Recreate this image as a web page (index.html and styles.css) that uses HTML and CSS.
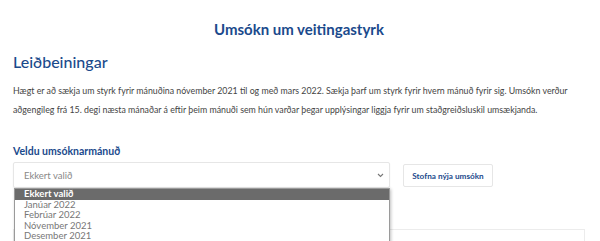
FILE: index.html
```html
<!DOCTYPE html>
<html lang="is">
<head>
  <meta charset="UTF-8" />
  <meta name="viewport" content="width=device-width, initial-scale=1.0"/>
  <title>Umsókn um veitingastyrk</title>
  <link rel="stylesheet" href="styles.css">
</head>
<body>
  <main class="page">
    <h1>Umsókn um veitingastyrk</h1>

    <h2>Leiðbeiningar</h2>
    <p class="intro">
      Hægt er að sækja um styrk fyrir mánuðina nóvember 2021 til og með mars 2022. Sækja þarf um styrk fyrir hvern mánuð fyrir sig. Umsókn verður<br>
      aðgengileg frá 15. degi næsta mánaðar á eftir þeim mánuði sem hún varðar þegar upplýsingar liggja fyrir um staðgreiðsluskil umsækjanda.
    </p>

    <label class="field-label" for="month">Veldu umsóknarmánuð</label>
    <div class="select-row">
      <div class="select-wrap">
        <div class="select-box" id="month">
          <span>Ekkert valið</span>
          <svg class="chevron" width="7" height="5" viewBox="0 0 7 5"><path d="M1 1l2.5 2.5L6 1" fill="none" stroke="#777" stroke-width="1.1"/></svg>
        </div>
        <ul class="options">
          <li class="selected">Ekkert valið</li>
          <li>Janúar 2022</li>
          <li>Febrúar 2022</li>
          <li>Nóvember 2021</li>
          <li>Desember 2021</li>
        </ul>
      </div>
      <button class="btn">Stofna nýja umsókn</button>
    </div>

    <div class="card"></div>
  </main>
</body>
</html>
```

FILE: styles.css
```css
body {
  font-family: Lato, 'Open Sans', sans-serif;
  margin: 0;
  padding: 0;
  background: #fff;
  color: #444;
  overflow: hidden;
}

.page {
  padding: 0 15px 0 13px;
}

h1 {
  margin: 0;
  padding-top: 20px;
  font-size: 15px;
  line-height: 18px;
  font-weight: 700;
  text-align: center;
  color: #1b4a8c;
}

h2 {
  margin: 14px 0 0;
  font-size: 16px;
  line-height: 20px;
  font-weight: 500;
  color: #1b4a8c;
}

.intro {
  margin: 9px 0 0;
  font-size: 8.8px;
  line-height: 19px;
  color: #444;
  white-space: nowrap;
}

.field-label {
  display: block;
  margin-top: 25px;
  font-size: 10.5px;
  line-height: 14px;
  font-weight: 700;
  color: #1b4a8c;
}

.select-row {
  display: flex;
  align-items: flex-start;
  gap: 13px;
  margin-top: 4px;
}

.select-wrap {
  position: relative;
  width: 377px;
}

.select-box {
  display: flex;
  align-items: center;
  justify-content: space-between;
  height: 24px;
  padding: 0 4px 0 10px;
  border: 1px solid #e6e6e6;
  border-radius: 2px;
  box-shadow: 0 1px 2px rgba(0,0,0,0.06);
  font-size: 9.5px;
  color: #888;
}

.chevron {
  margin-right: 1px;
}

.options {
  position: absolute;
  top: 26px;
  left: 1px;
  right: 0;
  margin: 0;
  padding: 0 0 2px;
  list-style: none;
  background: #fff;
  border: 1px solid #9a9a9a;
  box-shadow: 1px 1px 3px rgba(0,0,0,0.25);
  z-index: 2;
}

.options li {
  height: 10.6px;
  line-height: 10.6px;
  padding-left: 9px;
  font-size: 9.5px;
  color: #777;
}

.options li.selected {
  background: #6b6b6b;
  color: #fff;
  font-weight: 700;
}

.btn {
  margin-top: 2px;
  height: 23px;
  width: 90px;
  background: #fff;
  border: 1px solid #e6e6e6;
  border-radius: 2px;
  font-family: inherit;
  font-size: 8.2px;
  font-weight: 700;
  color: #1b4a8c;
  padding: 0;
}

.card {
  margin-top: 41px;
  border: 1px solid #ececec;
  height: 40px;
}
```
